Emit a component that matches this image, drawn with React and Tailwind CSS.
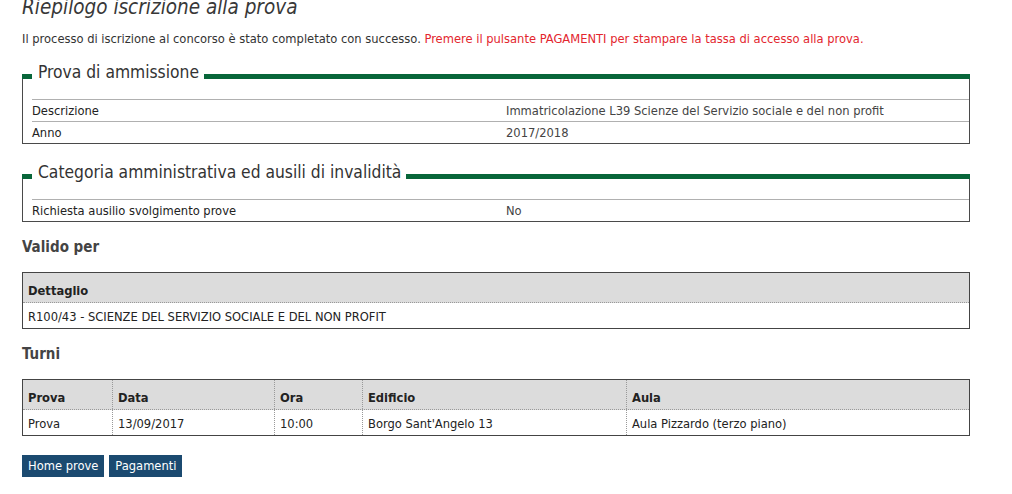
import React from "react";

function Fieldset({ title, rows, className }) {
  return (
    <div className={className}>
      <div className="flex items-end h-[20px]">
        <div className="w-[10px] h-[5px] mb-[3px] bg-[#08663a]" />
        <span className="pl-[6px] pr-[5px] text-[17.3px] leading-[20px] text-[#333] whitespace-nowrap">
          {title}
        </span>
        <div className="flex-1 h-[5px] mb-[3px] bg-[#08663a]" />
      </div>
      <div className="-mt-[3px] border-x border-b border-[#4a4a4a] pt-[20px]">
        <div className="ml-[9px]">
          {rows.map(([k, v]) => (
            <div
              key={k}
              className="flex items-center h-[22px] border-t border-[#b0b0b0] text-[12.8px] leading-[16px]"
            >
              <div className="w-[474px] text-[#222]">{k}</div>
              <div className="text-[#444]">{v}</div>
            </div>
          ))}
        </div>
      </div>
    </div>
  );
}

function Heading({ children }) {
  return (
    <h2 className="mt-[16px] text-[15px] leading-[19px] font-bold text-[#444]">{children}</h2>
  );
}

export default function App() {
  const turniHead = ["Prova", "Data", "Ora", "Edificio", "Aula"];
  const turniRow = ["Prova", "13/09/2017", "10:00", "Borgo Sant'Angelo 13", "Aula Pizzardo (terzo piano)"];
  return (
    <div className="min-h-[494px] bg-white font-['DejaVu_Sans_Condensed','DejaVu_Sans',sans-serif] font-stretch-condensed text-[#333] pl-[22px] overflow-hidden">
      <div className="w-[948px]">
        <h1 className="-mt-[5px] text-[20.5px] leading-[24px] italic font-normal text-[#383838]">
          Riepilogo iscrizione alla prova
        </h1>
        <p className="mt-[12px] text-[12.8px] leading-[16px] text-[#333] whitespace-nowrap">
          Il processo di iscrizione al concorso è stato completato con successo.{" "}
          <span className="text-[#e3262e]">
            Premere il pulsante PAGAMENTI per stampare la tassa di accesso alla prova.
          </span>
        </p>

        <Fieldset
          className="mt-[15px]"
          title="Prova di ammissione"
          rows={[
            ["Descrizione", "Immatricolazione L39 Scienze del Servizio sociale e del non profit"],
            ["Anno", "2017/2018"],
          ]}
        />

        <Fieldset
          className="mt-[18px]"
          title="Categoria amministrativa ed ausili di invalidità"
          rows={[["Richiesta ausilio svolgimento prove", "No"]]}
        />

        <Heading>Valido per</Heading>
        <div className="mt-[15px] border border-[#444] text-[12.8px] leading-[16px]">
          <div className="bg-[#dcdcdc] border-b border-dotted border-[#999] pl-[5px] pt-[10px] pb-[3px] font-bold text-[#222]">
            Dettaglio
          </div>
          <div className="pl-[5px] pt-[6px] pb-[3px] text-[#222]">
            R100/43 - SCIENZE DEL SERVIZIO SOCIALE E DEL NON PROFIT
          </div>
        </div>

        <Heading>Turni</Heading>
        <div className="mt-[15px] border border-[#444] text-[12.8px] leading-[16px]">
          <div className="grid grid-cols-[89px_162px_88px_264px_1fr] bg-[#dcdcdc] border-b border-dotted border-[#999]">
            {turniHead.map((h, i) => (
              <div
                key={h}
                className={
                  i === 0
                    ? "pl-[5px] pt-[10px] pb-[3px] font-bold text-[#222]"
                    : "pl-[5px] pt-[10px] pb-[3px] font-bold text-[#222] border-l border-dotted border-[#999]"
                }
              >
                {h}
              </div>
            ))}
          </div>
          <div className="grid grid-cols-[89px_162px_88px_264px_1fr]">
            {turniRow.map((c, i) => (
              <div
                key={i}
                className={
                  i === 0
                    ? "pl-[5px] pt-[6px] pb-[3px] text-[#222]"
                    : "pl-[5px] pt-[6px] pb-[3px] text-[#222] border-l border-dotted border-[#999]"
                }
              >
                {c}
              </div>
            ))}
          </div>
        </div>

        <div className="mt-[19px] flex gap-[5px]">
          <button className="h-[22px] px-[6px] bg-[#1b4a70] text-white text-[12.8px] leading-[22px]">
            Home prove
          </button>
          <button className="h-[22px] px-[6px] bg-[#1b4a70] text-white text-[12.8px] leading-[22px]">
            Pagamenti
          </button>
        </div>
      </div>
    </div>
  );
}
